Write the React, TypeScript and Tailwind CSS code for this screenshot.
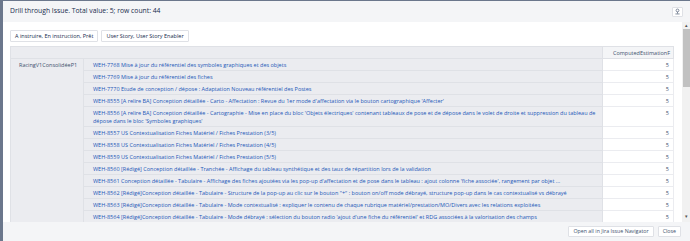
import React from 'react'

const rows: { key: string; title: string }[] = [
  { key: 'WEH-7768', title: 'Mise à jour du référentiel des symboles graphiques et des objets' },
  { key: 'WEH-7769', title: 'Mise à jour du référentiel des fiches' },
  { key: 'WEH-7770', title: 'Etude de conception / dépose : Adaptation Nouveau référentiel des Postes' },
  { key: 'WEH-8555', title: "[A relire BA] Conception détaillée - Carto - Affectation : Revue du 1er mode d'affectation via le bouton cartographique 'Affecter'" },
  { key: 'WEH-8556', title: "[A relire BA] Conception détaillée - Cartographie - Mise en place du bloc 'Objets électriques' contenant tableaux de pose et de dépose dans le volet de droite et suppression du tableau de dépose dans le bloc 'Symboles graphiques'" },
  { key: 'WEH-8557', title: 'US Contextualisation Fiches Matériel / Fiches Prestation (3/5)' },
  { key: 'WEH-8558', title: 'US Contextualisation Fiches Matériel / Fiches Prestation (4/5)' },
  { key: 'WEH-8559', title: 'US Contextualisation Fiches Matériel / Fiches Prestation (5/5)' },
  { key: 'WEH-8560', title: '[Rédigé] Conception détaillée - Tranchée - Affichage du tableau synthétique et des taux de répartition lors de la validation' },
  { key: 'WEH-8561', title: "Conception détaillée - Tabulaire - Affichage des fiches ajoutées via les pop-up d'affectation et de pose dans le tableau : ajout colonne 'fiche associée', rangement par objet ..." },
  { key: 'WEH-8562', title: '[Rédigé]Conception détaillée - Tabulaire - Structure de la pop-up au clic sur le bouton "+" : bouton on/off mode débrayé, structure pop-up dans le cas contextualisé vs débrayé' },
  { key: 'WEH-8563', title: '[Rédigé]Conception détaillée - Tabulaire - Mode contextualisé : expliquer le contenu de chaque rubrique matériel/prestation/MO/Divers avec les relations exploitées' },
  { key: 'WEH-8564', title: "[Rédigé]Conception détaillée - Tabulaire - Mode débrayé : sélection du bouton radio 'ajout d'une fiche du référentiel' et RDG associées à la valorisation des champs" },
]

function PopIcon() {
  return (
    <svg width="7" height="7" viewBox="0 0 10 10" fill="none" stroke="#6b778c" strokeWidth="1.2">
      <circle cx="5" cy="3.5" r="2" />
      <path d="M5 5.5v2.5M2 8.5h6" />
    </svg>
  )
}

export default function App() {
  return (
    <div className="w-[690px] h-[241px] overflow-hidden bg-[#6b778c] pl-[3px] pt-[1px] font-['Open_Sans',sans-serif]">
      <div className="flex h-full flex-col bg-white">
        {/* header */}
        <div className="flex h-[21px] shrink-0 items-center justify-between bg-[#f4f5f7] pl-[7px] pr-[7px]">
          <span className="text-[6.8px] text-[#172b4d]">Drill through Issue. Total value: 5; row count: 44</span>
          <div className="flex h-[10px] w-[11px] items-center justify-center rounded-[1px] border border-[#dfe1e6] bg-white">
            <PopIcon />
          </div>
        </div>

        {/* body */}
        <div className="flex h-[200px] shrink-0">
          <div className="flex-1 overflow-hidden pl-[7px] pt-[8px]">
            <div className="flex gap-[3px]">
              <div className="flex h-[12px] items-center rounded-[1px] border border-[#dfe1e6] bg-white px-[4px] text-[5.5px] text-[#172b4d]">
                A instruire, En instruction, Prêt
              </div>
              <div className="flex h-[12px] items-center rounded-[1px] border border-[#dfe1e6] bg-white px-[4px] text-[5.5px] text-[#172b4d]">
                User Story, User Story Enabler
              </div>
            </div>

            <table className="mt-[4px] w-[663px] table-fixed border-collapse text-[5.5px] leading-[8px]">
              <colgroup>
                <col className="w-[73px]" />
                <col className="w-[519px]" />
                <col className="w-[71px]" />
              </colgroup>
              <thead>
                <tr className="h-[12px]">
                  <th colSpan={2} className="border border-[#dfe1e6] bg-[#ebecf0]" />
                  <th className="overflow-hidden whitespace-nowrap border border-[#dfe1e6] bg-[#f4f5f7] pr-[3px] text-right font-normal text-[#42526e]">
                    ComputedEstimationF
                  </th>
                </tr>
              </thead>
              <tbody>
                {rows.map((r, i) => (
                  <tr key={r.key}>
                    {i === 0 && (
                      <td rowSpan={rows.length} className="border border-[#dfe1e6] bg-[#ebecf0] pl-[8px] pt-[2px] align-top text-[#42526e]">
                        RacingV1ConsolidéeP1
                      </td>
                    )}
                    <td className="border border-[#dfe1e6] bg-[#ebecf0] pb-[1px] pl-[9px] pr-[4px] pt-[2px] align-top">
                      <a className="text-[#1d58b8]">
                        {r.key} {r.title}
                      </a>
                    </td>
                    <td className="border border-[#ebecf0] bg-white pb-[1px] pr-[4px] pt-[2px] text-right align-top text-[#42526e]">
                      5
                    </td>
                  </tr>
                ))}
              </tbody>
            </table>
          </div>

          {/* scrollbar */}
          <div className="flex w-[8px] shrink-0 flex-col items-center bg-[#f1f1f1]">
            <div className="flex h-[7px] items-center justify-center text-[5px] leading-none text-[#505050]">▴</div>
            <div className="h-[58px] w-[7px] bg-[#c1c1c1]" />
            <div className="flex-1" />
            <div className="mb-[2px] flex h-[7px] items-center justify-center text-[5px] leading-none text-[#505050]">▾</div>
          </div>
        </div>

        {/* footer */}
        <div className="flex flex-1 items-center justify-end gap-[4px] bg-[#f4f5f7] pr-[9px]">
          <div className="flex h-[11px] items-center rounded-[1px] border border-[#dfe1e6] bg-white px-[4px] text-[5.3px] text-[#42526e]">
            Open all in Jira Issue Navigator
          </div>
          <div className="flex h-[11px] items-center rounded-[1px] border border-[#dfe1e6] bg-white px-[4px] text-[5.3px] text-[#42526e]">
            Close
          </div>
        </div>
      </div>
    </div>
  )
}
